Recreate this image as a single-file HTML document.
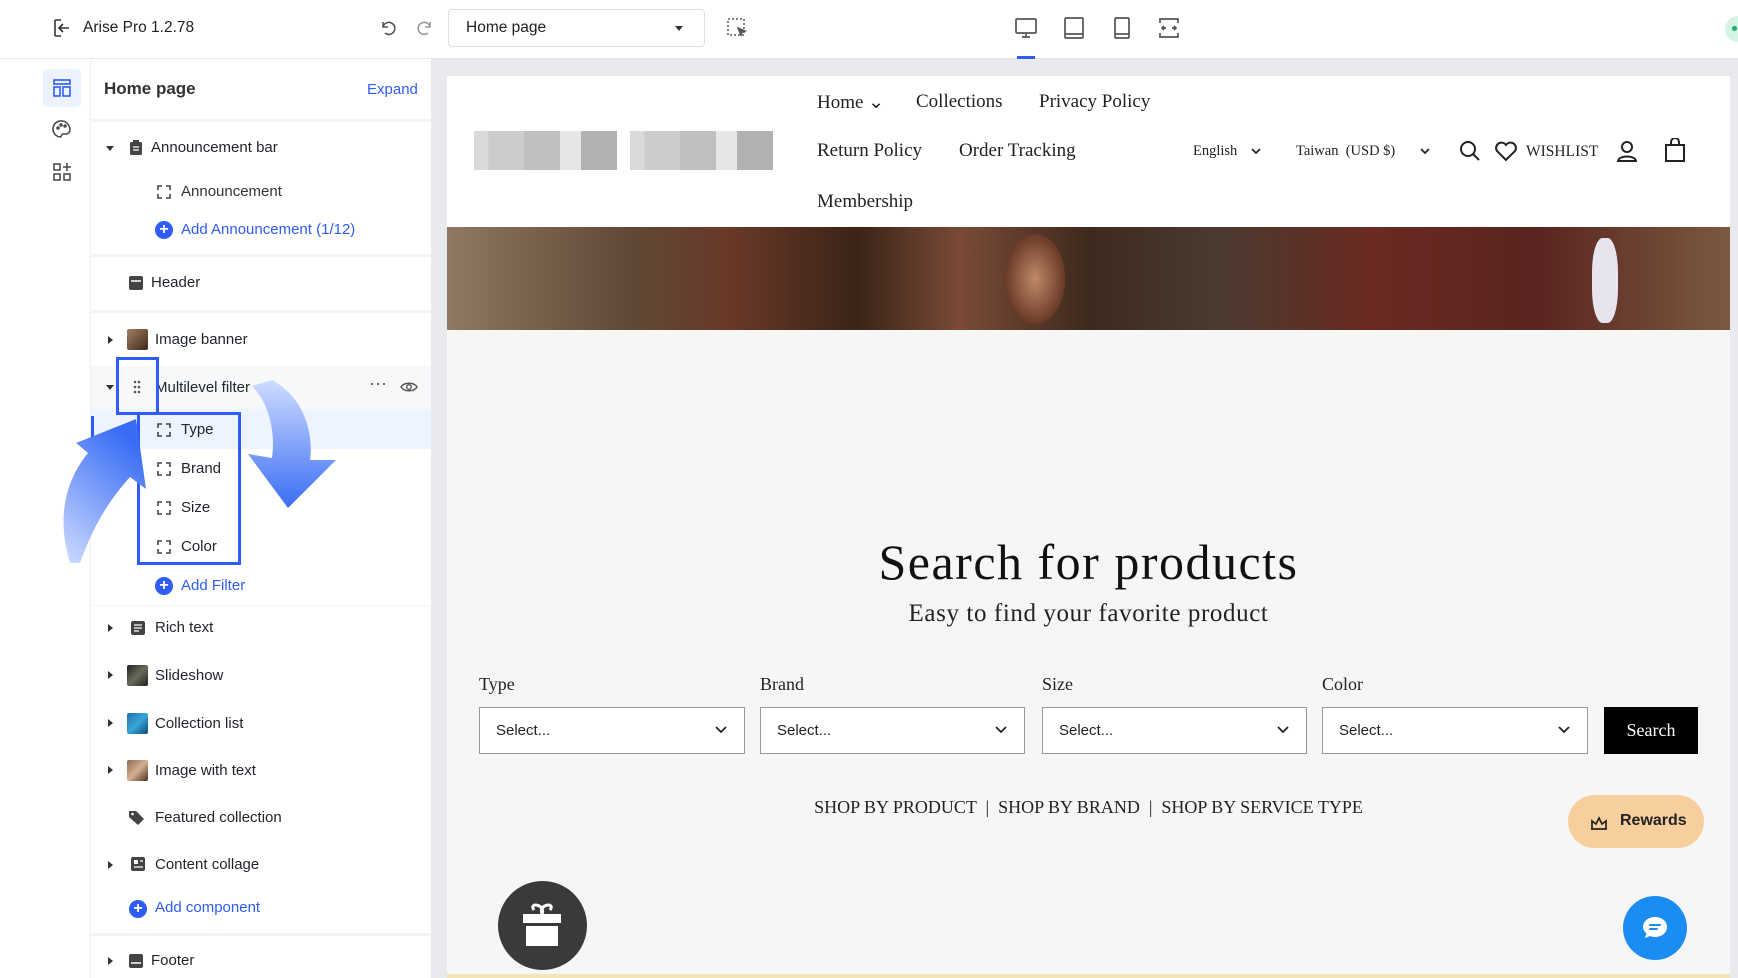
<!DOCTYPE html>
<html><head><meta charset="utf-8"><style>
*{box-sizing:border-box;margin:0;padding:0}
body{width:1738px;height:978px;overflow:hidden;background:#fff;font-family:"Liberation Sans",sans-serif;color:#1f2329;position:relative}
.a{position:absolute}
.top{left:0;top:0;width:1738px;height:59px;background:#fff;border-bottom:1px solid #e5e7eb}
.rail{left:39px;top:59px;width:52px;height:919px;background:#fff;border-right:1px solid #eceef1}
.panel{left:91px;top:59px;width:340px;height:919px;background:#fff}
.prev{left:431px;top:59px;width:1307px;height:919px;background:#e8eaed}
.page{left:447px;top:76px;width:1283px;height:902px;background:#f6f6f6}
.it{position:absolute;font-size:15px;color:#1f2329;line-height:20px}
.blue{color:#2f5cf5}
.sep{position:absolute;left:91px;width:340px;height:3px;background:#f3f4f6}
.tri{position:absolute;width:0;height:0;border-top:4px solid transparent;border-bottom:4px solid transparent;border-left:5px solid #333}
.trid{position:absolute;width:0;height:0;border-left:4px solid transparent;border-right:4px solid transparent;border-top:5px solid #333}
.br{position:absolute;width:14px;height:14px}
.nav{position:absolute;font-family:"Liberation Serif",serif;font-size:19px;color:#222}
.sel{position:absolute;top:707px;height:47px;background:#fff;border:1px solid #999;font-size:15px;padding:14px 16px;color:#222}
.lab{position:absolute;top:674px;font-family:"Liberation Serif",serif;font-size:18px;color:#222}
.plus{position:absolute;width:18px;height:18px;border-radius:50%;background:#2f5cf5;color:#fff;font-size:16px;line-height:18px;text-align:center;font-weight:bold}
.thumb{position:absolute;width:21px;height:21px;border-radius:2px}
</style></head><body>
<div class="a top"></div>
<svg class="a" style="left:52px;top:18px" width="20" height="20" viewBox="0 0 20 20" fill="none" stroke="#333" stroke-width="1.6"><path d="M3 2v16M3 2h6M3 18h6M17 10H8M11 6l-4 4 4 4"/></svg>
<div class="a" style="left:83px;top:19px;font-size:15.5px;color:#222">Arise Pro 1.2.78</div>
<svg class="a" style="left:378px;top:18px" width="20" height="20" viewBox="0 0 20 20" fill="none" stroke="#555" stroke-width="1.6"><path d="M5 4v5h5M5 9a6 6 0 1 1 2 6"/></svg>
<svg class="a" style="left:415px;top:18px" width="20" height="20" viewBox="0 0 20 20" fill="none" stroke="#999" stroke-width="1.6"><path d="M15 4v5h-5M15 9a6 6 0 1 0-2 6"/></svg>
<div class="a" style="left:448px;top:9px;width:257px;height:38px;border:1px solid #dcdfe4;border-radius:4px"></div>
<div class="a" style="left:466px;top:19px;font-size:15.5px;color:#222">Home page</div>
<div class="trid" style="left:675px;top:26px"></div>
<svg class="a" style="left:726px;top:17px" width="22" height="22" viewBox="0 0 22 22" fill="none" stroke="#555" stroke-width="1.5" stroke-dasharray="2 2"><rect x="2" y="2" width="16" height="16"/><path d="M12 11l7 3-3 1-1 3z" stroke-dasharray="none" fill="#555"/></svg>
<svg class="a" style="left:1014px;top:16px" width="24" height="24" viewBox="0 0 24 24" fill="none" stroke="#555" stroke-width="1.7"><rect x="2" y="3" width="20" height="14" rx="1"/><path d="M8 21h8M12 17v4"/></svg>
<div class="a" style="left:1017px;top:56px;width:18px;height:3px;background:#2f5cf5"></div>
<svg class="a" style="left:1062px;top:16px" width="24" height="24" viewBox="0 0 24 24" fill="none" stroke="#555" stroke-width="1.7"><rect x="3" y="2" width="18" height="20" rx="1"/><path d="M3 18h18"/></svg>
<svg class="a" style="left:1110px;top:16px" width="24" height="24" viewBox="0 0 24 24" fill="none" stroke="#555" stroke-width="1.7"><rect x="5" y="2" width="14" height="20" rx="1"/><path d="M5 18h14"/></svg>
<svg class="a" style="left:1157px;top:16px" width="24" height="24" viewBox="0 0 24 24" fill="none" stroke="#555" stroke-width="1.7"><path d="M3 7V3h18v4M3 17v4h18v-4M5 12h4M15 12h4M7 10l-2 2 2 2M17 10l2 2-2 2"/></svg>
<div class="a" style="left:1725px;top:16px;width:26px;height:26px;border-radius:50%;background:#d4f5e4"></div>
<div class="a" style="left:1732px;top:26px;width:5px;height:5px;border-radius:50%;background:#17b26a"></div>

<div class="a rail"></div>
<div class="a" style="left:43px;top:69px;width:38px;height:38px;border-radius:5px;background:#ecf2ff"></div>
<svg class="a" style="left:51px;top:77px" width="22" height="22" viewBox="0 0 22 22" fill="none" stroke="#2f5cf5" stroke-width="1.6"><rect x="3" y="3" width="16" height="4"/><rect x="3" y="10" width="6" height="9"/><rect x="12" y="10" width="7" height="9"/></svg>
<svg class="a" style="left:51px;top:118px" width="22" height="22" viewBox="0 0 22 22" fill="none" stroke="#444" stroke-width="1.5"><path d="M11 3a8 8 0 0 0-2 16c2 0 1-3 3-3h3a4 4 0 0 0 4-4c0-5-4-9-8-9z"/><circle cx="7" cy="10" r="1"/><circle cx="10" cy="7" r="1"/><circle cx="14" cy="8" r="1"/></svg>
<svg class="a" style="left:51px;top:161px" width="22" height="22" viewBox="0 0 22 22" fill="none" stroke="#444" stroke-width="1.5"><rect x="3" y="3" width="6" height="6"/><rect x="3" y="13" width="6" height="6"/><rect x="13" y="13" width="6" height="6"/><path d="M16 2v8M12 6h8"/></svg>

<div class="a panel"></div>
<div class="it" style="left:104px;top:79px;font-size:17px;font-weight:bold;color:#333">Home page</div>
<div class="it blue" style="left:367px;top:80px">Expand</div>
<div class="sep" style="top:119px"></div>
<div class="trid" style="left:106px;top:146px"></div>
<svg class="a" style="left:128px;top:139px" width="16" height="17" viewBox="0 0 16 17"><rect x="2" y="3" width="12" height="13" rx="1.5" fill="#444"/><rect x="5" y="1" width="6" height="3" fill="#444"/><path d="M5 8h6M5 11h6" stroke="#fff" stroke-width="1.3"/></svg>
<div class="it" style="left:151px;top:138px">Announcement bar</div>
<svg class="br" style="left:157px;top:185px" viewBox="0 0 14 14" fill="none" stroke="#444" stroke-width="1.6"><path d="M1 5V1h4M9 1h4v4M13 9v4H9M5 13H1V9"/></svg>
<div class="it" style="left:181px;top:182px;color:#333">Announcement</div>
<div class="plus" style="left:155px;top:221px">+</div>
<div class="it blue" style="left:181px;top:220px">Add Announcement (1/12)</div>
<div class="sep" style="top:254px"></div>
<svg class="a" style="left:128px;top:275px" width="16" height="16" viewBox="0 0 16 16"><rect x="1" y="1" width="14" height="14" rx="2" fill="#444"/><path d="M3 6h10" stroke="#fff" stroke-width="1.5"/></svg>
<div class="it" style="left:151px;top:273px">Header</div>
<div class="sep" style="top:310px"></div>
<div class="tri" style="left:108px;top:336px"></div>
<div class="thumb" style="left:127px;top:329px;background:linear-gradient(135deg,#a58060,#3b2a1c)"></div>
<div class="it" style="left:155px;top:330px">Image banner</div>
<div class="a" style="left:91px;top:366px;width:340px;height:43px;background:#f7f8fa"></div>
<div class="a" style="left:91px;top:409px;width:340px;height:40px;background:#eef4ff"></div>
<div class="a" style="left:91px;top:416px;width:3px;height:30px;background:#2f5cf5"></div>
<div class="trid" style="left:106px;top:385px"></div>
<svg class="a" style="left:133px;top:380px" width="8" height="14" viewBox="0 0 8 14" fill="#555"><circle cx="2" cy="2" r="1.3"/><circle cx="6" cy="2" r="1.3"/><circle cx="2" cy="7" r="1.3"/><circle cx="6" cy="7" r="1.3"/><circle cx="2" cy="12" r="1.3"/><circle cx="6" cy="12" r="1.3"/></svg>
<div class="it" style="left:155px;top:378px">Multilevel filter</div>
<div class="it" style="left:369px;top:373px;font-size:18px;color:#555">···</div>
<svg class="a" style="left:400px;top:379px" width="18" height="16" viewBox="0 0 18 16" fill="none" stroke="#555" stroke-width="1.4"><path d="M1 8c3-5 13-5 16 0-3 5-13 5-16 0z"/><circle cx="9" cy="8" r="2.3"/></svg>
<svg class="br" style="left:157px;top:423px" viewBox="0 0 14 14" fill="none" stroke="#444" stroke-width="1.6"><path d="M1 5V1h4M9 1h4v4M13 9v4H9M5 13H1V9"/></svg>
<div class="it" style="left:181px;top:420px">Type</div>
<svg class="br" style="left:157px;top:462px" viewBox="0 0 14 14" fill="none" stroke="#444" stroke-width="1.6"><path d="M1 5V1h4M9 1h4v4M13 9v4H9M5 13H1V9"/></svg>
<div class="it" style="left:181px;top:459px">Brand</div>
<svg class="br" style="left:157px;top:501px" viewBox="0 0 14 14" fill="none" stroke="#444" stroke-width="1.6"><path d="M1 5V1h4M9 1h4v4M13 9v4H9M5 13H1V9"/></svg>
<div class="it" style="left:181px;top:498px">Size</div>
<svg class="br" style="left:157px;top:540px" viewBox="0 0 14 14" fill="none" stroke="#444" stroke-width="1.6"><path d="M1 5V1h4M9 1h4v4M13 9v4H9M5 13H1V9"/></svg>
<div class="it" style="left:181px;top:537px">Color</div>
<div class="plus" style="left:155px;top:577px">+</div>
<div class="it blue" style="left:181px;top:576px">Add Filter</div>
<div class="sep" style="top:605px;height:1px"></div>
<div class="tri" style="left:108px;top:624px"></div>
<svg class="a" style="left:130px;top:620px" width="16" height="16" viewBox="0 0 16 16"><rect x="1" y="1" width="14" height="14" rx="2" fill="#444"/><path d="M4 5h8M4 8h8M4 11h5" stroke="#fff" stroke-width="1.3"/></svg>
<div class="it" style="left:155px;top:618px">Rich text</div>
<div class="tri" style="left:108px;top:671px"></div>
<div class="thumb" style="left:127px;top:665px;background:linear-gradient(135deg,#222,#6a6a5a,#222)"></div>
<div class="it" style="left:155px;top:666px">Slideshow</div>
<div class="tri" style="left:108px;top:719px"></div>
<div class="thumb" style="left:127px;top:713px;background:linear-gradient(135deg,#1a6fa8,#38a6d8,#0c4c77)"></div>
<div class="it" style="left:155px;top:714px">Collection list</div>
<div class="tri" style="left:108px;top:766px"></div>
<div class="thumb" style="left:127px;top:760px;background:linear-gradient(135deg,#8a6a50,#d4b090,#4a3020)"></div>
<div class="it" style="left:155px;top:761px">Image with text</div>
<svg class="a" style="left:128px;top:809px" width="18" height="18" viewBox="0 0 18 18" fill="#444"><path d="M1 2h7l8 8-6 6-9-8z"/><circle cx="4.5" cy="5" r="1.3" fill="#fff"/></svg>
<div class="it" style="left:155px;top:808px">Featured collection</div>
<div class="tri" style="left:108px;top:861px"></div>
<svg class="a" style="left:130px;top:856px" width="16" height="16" viewBox="0 0 16 16"><rect x="1" y="1" width="14" height="14" rx="2" fill="#444"/><rect x="4" y="4" width="4" height="4" fill="#fff"/><path d="M10 5h3M4 11h9" stroke="#fff" stroke-width="1.3"/></svg>
<div class="it" style="left:155px;top:855px">Content collage</div>
<div class="plus" style="left:129px;top:900px">+</div>
<div class="it blue" style="left:155px;top:898px">Add component</div>
<div class="sep" style="top:933px"></div>
<div class="tri" style="left:108px;top:957px"></div>
<svg class="a" style="left:128px;top:953px" width="16" height="16" viewBox="0 0 16 16"><rect x="1" y="1" width="14" height="14" rx="2" fill="#444"/><path d="M3 10h10" stroke="#fff" stroke-width="1.5"/></svg>
<div class="it" style="left:151px;top:951px">Footer</div>

<div class="a" style="left:116px;top:357px;width:43px;height:58px;border:3px solid #2f5cf5"></div>
<div class="a" style="left:137px;top:412px;width:104px;height:153px;border:3px solid #2f5cf5"></div>
<svg class="a" style="left:40px;top:370px" width="320" height="200" viewBox="0 0 320 200">
<defs><linearGradient id="g1" x1="0" y1="1" x2="0.5" y2="0"><stop offset="0" stop-color="#cfdcff"/><stop offset="1" stop-color="#3a6df5"/></linearGradient>
<linearGradient id="g2" x1="0" y1="0" x2="0" y2="1"><stop offset="0" stop-color="#cfdcff"/><stop offset="1" stop-color="#3a6df5"/></linearGradient></defs>
<path d="M30 193c-12-40-8-78 18-110l-12-10 60-24 10 70-16-12c-22 24-38 52-50 86z" fill="url(#g1)"/>
<path d="M232 10c30 16 42 50 38 80l26 0-48 48-40-54 24 4c4-28-4-56-20-72z" fill="url(#g2)"/>
</svg>

<div class="a prev"></div>
<div class="a page"></div>
<div class="a" style="left:447px;top:76px;width:1283px;height:151px;background:#fff"></div>
<div class="a" style="left:474px;top:131px;width:143px;height:39px;background:linear-gradient(90deg,#ccc 0 10%,#bbb 10% 35%,#aaa 35% 60%,#ddd 60% 75%,#999 75% 100%);opacity:.75"></div>
<div class="a" style="left:630px;top:131px;width:143px;height:39px;background:linear-gradient(90deg,#ccc 0 10%,#bbb 10% 35%,#aaa 35% 60%,#ddd 60% 75%,#999 75% 100%);opacity:.75"></div>
<div class="nav" style="left:817px;top:91px">Home ⌄</div>
<div class="nav" style="left:916px;top:91px">Collections</div>
<div class="nav" style="left:1039px;top:91px">Privacy Policy</div>
<div class="nav" style="left:817px;top:140px">Return Policy</div>
<div class="nav" style="left:959px;top:140px">Order Tracking</div>
<div class="nav" style="left:817px;top:191px">Membership</div>
<div class="nav" style="left:1193px;top:143px;font-size:14.5px">English</div>
<svg class="a" style="left:1250px;top:146px" width="12" height="10" viewBox="0 0 12 10" fill="none" stroke="#222" stroke-width="1.7"><path d="M2 3l4 4 4-4"/></svg>
<div class="nav" style="left:1296px;top:143px;font-size:14.5px">Taiwan &nbsp;(USD $)</div>
<svg class="a" style="left:1419px;top:146px" width="12" height="10" viewBox="0 0 12 10" fill="none" stroke="#222" stroke-width="1.7"><path d="M2 3l4 4 4-4"/></svg>
<svg class="a" style="left:1459px;top:140px" width="22" height="22" viewBox="0 0 22 22" fill="none" stroke="#222" stroke-width="2"><circle cx="9" cy="9" r="7"/><path d="M14 14l6 6"/></svg>
<svg class="a" style="left:1494px;top:140px" width="24" height="22" viewBox="0 0 24 22" fill="none" stroke="#222" stroke-width="2"><path d="M12 20L3 11a5 5 0 0 1 9-6 5 5 0 0 1 9 6z"/></svg>
<div class="nav" style="left:1526px;top:143px;font-size:15.5px">WISHLIST</div>
<svg class="a" style="left:1616px;top:140px" width="22" height="22" viewBox="0 0 22 22" fill="none" stroke="#222" stroke-width="2"><circle cx="11" cy="7" r="5"/><path d="M2 21c1-6 17-6 18 0z"/></svg>
<svg class="a" style="left:1664px;top:138px" width="22" height="24" viewBox="0 0 22 24" fill="none" stroke="#222" stroke-width="2"><rect x="2" y="7" width="18" height="16"/><path d="M7 7V4a4 4 0 0 1 8 0v3"/></svg>
<div class="a" style="left:447px;top:227px;width:1283px;height:103px;background:linear-gradient(90deg,#8e7a63 0%,#5e4a36 14%,#6a3828 22%,#3a2418 32%,#7a4a36 40%,#3d2a1e 50%,#4a3a30 60%,#6a2a22 72%,#5a2420 85%,#7a5a40 100%)"></div>
<div class="a" style="left:1005px;top:234px;width:60px;height:90px;border-radius:40%;background:radial-gradient(#c08a68,#6a3a28 70%,transparent 72%)"></div>
<div class="a" style="left:1592px;top:238px;width:26px;height:85px;border-radius:40%;background:#e8e4ef"></div>

<div class="a" style="left:447px;top:533px;width:1283px;text-align:center;font-family:'Liberation Serif',serif;font-size:50px;color:#111;letter-spacing:1.5px">Search for products</div>
<div class="a" style="left:447px;top:600px;width:1283px;text-align:center;font-family:'Liberation Serif',serif;font-size:25px;color:#222;letter-spacing:.6px">Easy to find your favorite product</div>
<div class="lab" style="left:479px">Type</div>
<div class="lab" style="left:760px">Brand</div>
<div class="lab" style="left:1042px">Size</div>
<div class="lab" style="left:1322px">Color</div>
<div class="sel" style="left:479px;width:266px">Select...</div>
<div class="sel" style="left:760px;width:265px">Select...</div>
<div class="sel" style="left:1042px;width:265px">Select...</div>
<div class="sel" style="left:1322px;width:266px">Select...</div>
<svg class="a" style="left:714px;top:724px" width="14" height="12" viewBox="0 0 14 12" fill="none" stroke="#222" stroke-width="1.8"><path d="M2 3l5 5 5-5"/></svg>
<svg class="a" style="left:994px;top:724px" width="14" height="12" viewBox="0 0 14 12" fill="none" stroke="#222" stroke-width="1.8"><path d="M2 3l5 5 5-5"/></svg>
<svg class="a" style="left:1276px;top:724px" width="14" height="12" viewBox="0 0 14 12" fill="none" stroke="#222" stroke-width="1.8"><path d="M2 3l5 5 5-5"/></svg>
<svg class="a" style="left:1557px;top:724px" width="14" height="12" viewBox="0 0 14 12" fill="none" stroke="#222" stroke-width="1.8"><path d="M2 3l5 5 5-5"/></svg>
<div class="a" style="left:1604px;top:707px;width:94px;height:47px;background:#000;color:#fff;font-family:'Liberation Serif',serif;font-size:18px;text-align:center;line-height:47px">Search</div>
<div class="a" style="left:447px;top:797px;width:1283px;text-align:center;font-family:'Liberation Serif',serif;font-size:18px;color:#222;letter-spacing:0">SHOP BY PRODUCT &nbsp;| &nbsp;SHOP BY BRAND &nbsp;| &nbsp;SHOP BY SERVICE TYPE</div>
<div class="a" style="left:1568px;top:795px;width:136px;height:53px;border-radius:27px;background:#f7cf9c"></div>
<svg class="a" style="left:1588px;top:810px" width="22" height="22" viewBox="0 0 22 22" fill="none" stroke="#222" stroke-width="1.7"><path d="M3 19h16M4 19V11l4 3 3-6 3 6 4-3v8"/></svg>
<div class="a" style="left:1620px;top:812px;font-size:16px;font-weight:bold;color:#222">Rewards</div>
<div class="a" style="left:1623px;top:896px;width:64px;height:64px;border-radius:50%;background:#1b8cf2"></div>
<svg class="a" style="left:1640px;top:913px" width="30" height="30" viewBox="0 0 30 30"><path d="M15 4c7 0 12 4.5 12 10s-5 10-12 10c-2 0-4-.4-5-1l-5 2 1.5-4.5C4.5 18.5 3 16.5 3 14 3 8.5 8 4 15 4z" fill="#fff"/><path d="M10 12h10M10 16h7" stroke="#1b8cf2" stroke-width="2" stroke-linecap="round"/></svg>
<div class="a" style="left:498px;top:881px;width:89px;height:89px;border-radius:50%;background:radial-gradient(circle,#3a3a3a 0 78%,#b03a2a 82%,#e0802a 100%)"></div>
<svg class="a" style="left:520px;top:900px" width="44" height="48" viewBox="0 0 44 48"><path d="M14 10c-6-8 12-6 8 4 -4-10 14-12 8-4" fill="none" stroke="#fff" stroke-width="3"/><rect x="3" y="14" width="38" height="9" fill="#fff"/><rect x="6" y="26" width="32" height="20" fill="#fff"/></svg>
<div class="a" style="left:447px;top:974px;width:1283px;height:4px;background:#f3e4b5"></div>
</body></html>
